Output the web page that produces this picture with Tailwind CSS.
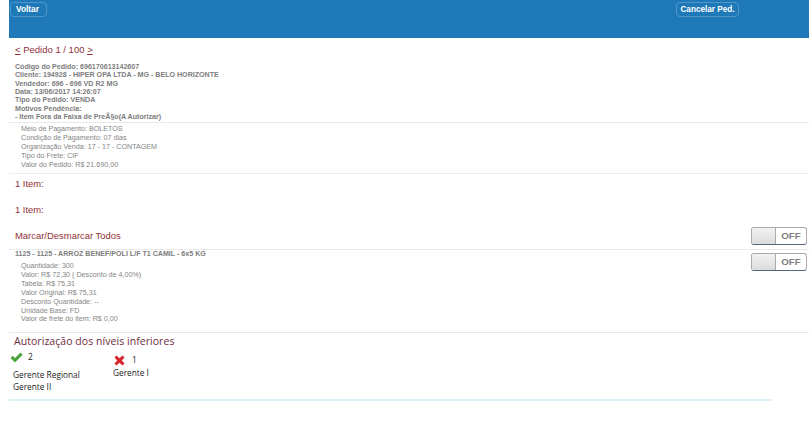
<!DOCTYPE html>
<html>
<head>
<meta charset="utf-8">
<script src="https://cdn.jsdelivr.net/npm/@tailwindcss/browser@4"></script>
</head>
<body class="bg-white font-['Liberation_Sans',Arial,sans-serif] overflow-hidden">
<div class="w-[809px] h-[426px] pl-[9px]">
    <!-- topo -->
    <div class="h-[38px] bg-[#1f79b8] flex justify-between pl-[1px] pr-[70px] pt-[2px] items-start">
        <a class="w-[37px] h-[15px] pl-[5px] rounded-[4px] border border-[#4f97cb] text-white font-bold text-[8.3px] leading-[13px]">Voltar</a>
        <a class="w-[63px] h-[15px] text-center rounded-[4px] border border-[#4f97cb] text-white font-bold text-[8.2px] leading-[13px]">Cancelar Ped.</a>
    </div>

    <!-- pedido -->
    <h2 class="pl-[6px] pt-[5px] h-[23px] text-[9.5px] leading-[14px] text-[#8f2f38]"><u>&lt;</u> Pedido 1 / 100 <u>&gt;</u></h2>
    <div class="pl-[6px] pt-[2px] pb-[1px] font-bold text-[7.1px] leading-[8.35px] text-[#7c7c7c]">
        <p>Código do Pedido: 696170613142607</p>
        <p>Cliente: 194928 - HIPER OPA LTDA - MG - BELO HORIZONTE</p>
        <p>Vendedor: 696 - 696 VD R2 MG</p>
        <p>Data: 13/06/2017 14:26:07</p>
        <p>Tipo do Pedido: VENDA</p>
        <p>Motivos Pendência:</p>
        <p>- Item Fora da Faixa de PreÃ§o(A Autorizar)</p>
    </div>
    <div class="border-t border-[#e8e8e8] pl-[12px] pt-[2px] h-[51px] text-[7.15px] leading-[8.9px] text-[#858585]">
        <p>Meio de Pagamento: BOLETOS</p>
        <p>Condição de Pagamento: 07 dias</p>
        <p>Organização Venda: 17 - 17 - CONTAGEM</p>
        <p>Tipo do Frete: CIF</p>
        <p>Valor do Pedido: R$ 21.690,00</p>
    </div>

    <!-- itens -->
    <div class="border-t border-[#eee] pl-[6px] pt-[3px] text-[9.4px] leading-[14px] text-[#8f2f38]">
        <p>1 Item:</p>
        <p class="mt-[12px]">1 Item:</p>
    </div>
    <div class="flex justify-between pl-[6px] pr-[2px] pt-[12px] h-[32px]">
        <p class="text-[9.45px] leading-[14px] text-[#8f2f38]">Marcar/Desmarcar Todos</p>
        <div class="w-[56px] h-[18px] mt-[-2px] rounded-[3px] border border-[#aaa] border-b-[#567] flex overflow-hidden">
            <span class="w-[24px] bg-linear-to-b from-[#f2f2f2] to-[#dcdcdc] border-r border-[#aaa]"></span>
            <span class="flex-1 text-center text-[9.8px] leading-[16px] font-bold text-[#808080]">OFF</span>
        </div>
    </div>
    <div class="border-t border-[#e8e8e8] flex justify-between pl-[6px] pr-[2px] h-[83px]">
        <div>
            <p class="font-bold text-[7.1px] leading-[9px] text-[#7c7c7c]">1125 - 1125 - ARROZ BENEF/POLI L/F T1 CAMIL - 6x5 KG</p>
            <div class="pl-[6px] pt-[3px] text-[7.15px] leading-[8.85px] text-[#858585]">
                <p>Quantidade: 300</p>
                <p>Valor: R$ 72,30 ( Desconto de 4,00%)</p>
                <p>Tabela: R$ 75,31</p>
                <p>Valor Original: R$ 75,31</p>
                <p>Desconto Quantidade: --</p>
                <p>Unidade Base: FD</p>
                <p>Valor de frete do item: R$ 0,00</p>
            </div>
        </div>
        <div class="w-[56px] h-[18px] mt-[3px] rounded-[3px] border border-[#aaa] border-b-[#567] flex overflow-hidden">
            <span class="w-[24px] bg-linear-to-b from-[#f2f2f2] to-[#dcdcdc] border-r border-[#aaa]"></span>
            <span class="flex-1 text-center text-[9.8px] leading-[16px] font-bold text-[#808080]">OFF</span>
        </div>
    </div>

    <!-- autorizacao -->
    <div class="border-t border-[#e8e8e8] w-[800px] h-[67px]">
        <h3 class="pl-[5px] pt-[1px] font-['Open_Sans',sans-serif] text-[10.5px] leading-[14px] tracking-[0.05px] text-[#6d2c3c]">Autorização dos níveis inferiores</h3>
        <div class="flex pl-[1px] mt-[2px] font-['Open_Sans',sans-serif] text-[8.3px] text-[#222]">
            <div class="w-[103px]">
                <div class="flex items-center h-[14px]">
                    <svg width="13" height="11" viewBox="0 0 13 11"><path d="M0.5 6 L2.8 3.8 L5 6 L10.5 0.5 L12.7 2.8 L5 10.5 Z" fill="#4aa63c"/></svg>
                    <span class="ml-[5px]">2</span>
                </div>
                <div class="mt-[5px] pl-[3px] leading-[11.5px]">
                    <p>Gerente Regional</p>
                    <p>Gerente II</p>
                </div>
            </div>
            <div>
                <div class="flex items-center h-[14px] mt-[3px]">
                    <svg class="ml-[1px]" width="11" height="11" viewBox="0 0 11 11"><path d="M2.5 0.5 L5.5 3.2 L8.5 0.5 L10.5 2.5 L7.8 5.5 L10.5 8.5 L8.5 10.5 L5.5 7.8 L2.5 10.5 L0.5 8.5 L3.2 5.5 L0.5 2.5 Z" fill="#d9262c"/></svg>
                    <span class="ml-[7px]">1</span>
                </div>
                <p class="leading-[11.5px]">Gerente I</p>
            </div>
        </div>
    </div>
    <div class="w-[762px] h-[2px] bg-[#d5f1f3]"></div>
</div>
</body>
</html>
